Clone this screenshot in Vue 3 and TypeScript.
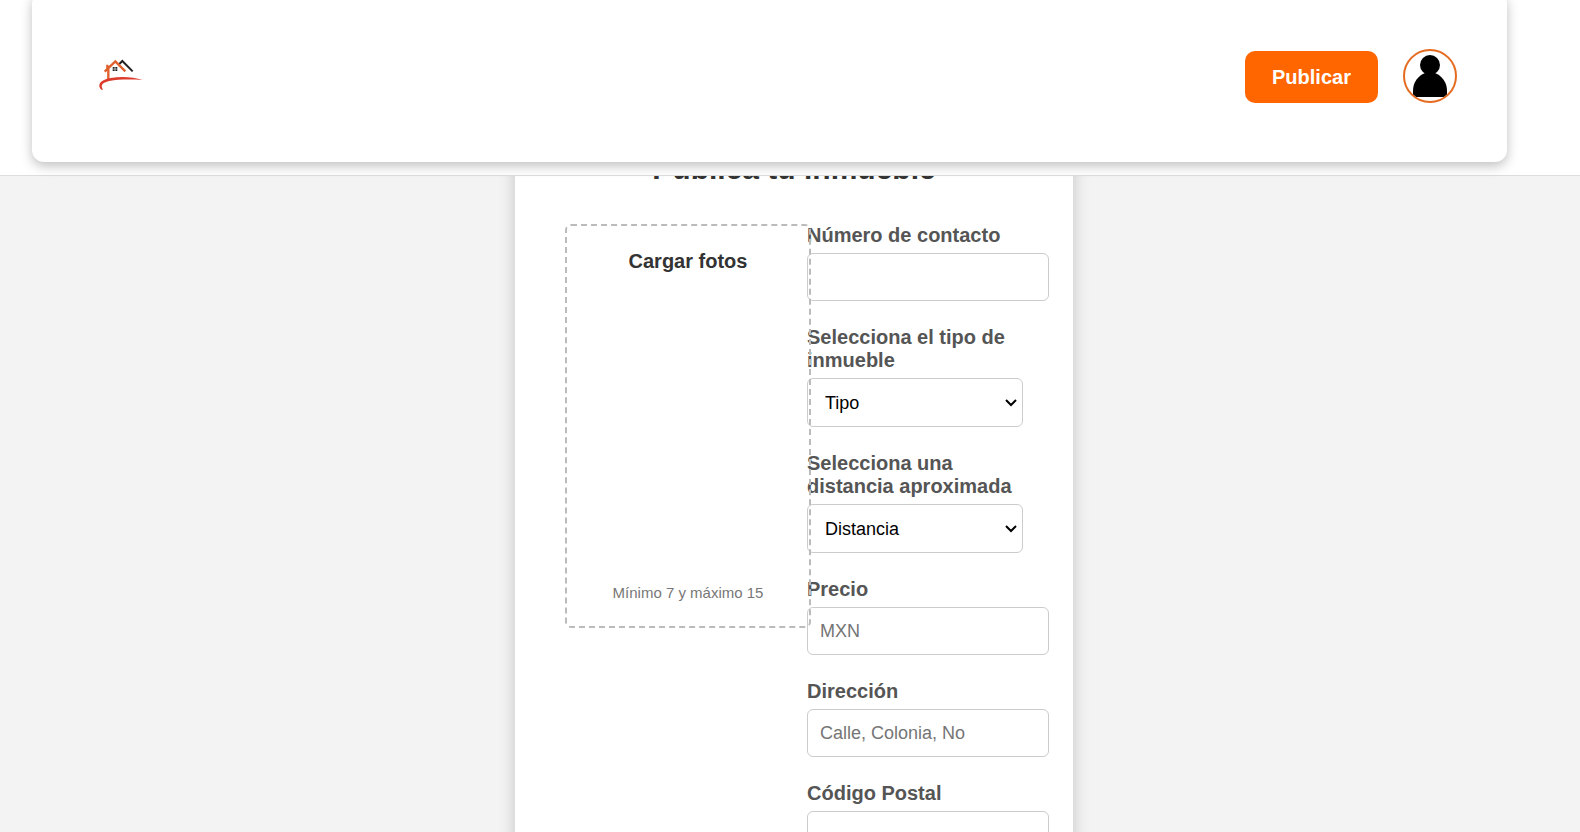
<script setup lang="ts">
import { reactive } from 'vue'

interface Field {
  id: string
  label: string
  kind: 'input' | 'select'
  hint: string
}

const fields: Field[] = [
  { id: 'contacto', label: 'Número de contacto', kind: 'input', hint: '' },
  { id: 'tipo', label: 'Selecciona el tipo de inmueble', kind: 'select', hint: 'Tipo' },
  { id: 'distancia', label: 'Selecciona una distancia aproximada', kind: 'select', hint: 'Distancia' },
  { id: 'precio', label: 'Precio', kind: 'input', hint: 'MXN' },
  { id: 'direccion', label: 'Dirección', kind: 'input', hint: 'Calle, Colonia, No' },
  { id: 'postal', label: 'Código Postal', kind: 'input', hint: '' },
]

const values = reactive<Record<string, string>>({
  contacto: '', tipo: '', distancia: '', precio: '', direccion: '', postal: '',
})
</script>

<template>
  <div class="page">
    <header class="topbar">
      <nav class="nav-card">
        <a class="logo" href="#">
          <svg viewBox="48 48 150 108" width="50" height="36" aria-hidden="true">
            <path d="M118 72L127 63L158 94" fill="none" stroke="#222" stroke-width="6" />
            <path d="M74 95L106 64L136 94M85 122V84M82 74V88" fill="none" stroke="#e0602c" stroke-width="7" />
            <path d="M98 81h6v5h-6zM106 81h6v5h-6zM98 88h6v5h-6zM106 88h6v5h-6z" fill="#222" />
            <path d="M64 149C50 136 60 119 92 114C125 109 160 111 188 120C150 118 115 118 88 123C66 128 61 136 69 149Z" fill="#dc3c2c" />
          </svg>
        </a>
        <div class="actions">
          <button class="publish" type="button">Publicar</button>
          <button class="avatar" type="button">
            <svg viewBox="0 0 50 50" width="50" height="50" aria-hidden="true">
              <circle cx="25" cy="14" r="10" />
              <path d="M8 46V40C8 31 13 25 20 22H30C37 25 42 31 42 40V46Z" />
            </svg>
          </button>
        </div>
      </nav>
    </header>

    <main class="content">
      <form class="form-card" @submit.prevent>
        <h1 class="title">Publica tu inmueble</h1>
        <div class="columns">
          <section class="photos">
            <h2>Cargar fotos</h2>
            <p>Mínimo 7 y máximo 15</p>
          </section>
          <div class="fields">
            <div v-for="f in fields" :key="f.id" class="field">
              <label :for="f.id">{{ f.label }}</label>
              <select v-if="f.kind === 'select'" :id="f.id" v-model="values[f.id]">
                <option value="">{{ f.hint }}</option>
              </select>
              <input v-else :id="f.id" v-model="values[f.id]" type="text" :placeholder="f.hint" />
            </div>
          </div>
        </div>
      </form>
    </main>
  </div>
</template>

<style>
body {
  margin: 0;
}
</style>

<style scoped>
.page {
  height: 100vh;
  overflow-y: auto;
  scrollbar-width: none;
  background: #f3f3f3;
  font-family: "Liberation Sans", Arial, sans-serif;
}
.topbar {
  position: fixed;
  inset: 0 0 auto 0;
  z-index: 10;
  padding: 0 73px 13px 32px;
  background: #fff;
  border-bottom: 1px solid #ddd;
}
.nav-card {
  display: flex;
  align-items: center;
  justify-content: space-between;
  box-sizing: border-box;
  height: 170px;
  margin-top: -8px;
  padding: 0 50px 2px 64px;
  border-radius: 12px;
  background: #fff;
  box-shadow: 0 4px 12px rgba(0, 0, 0, 0.25);
}
.logo {
  padding-bottom: 4px;
}
.logo svg,
.avatar svg {
  display: block;
}
.actions {
  display: flex;
  align-items: flex-end;
  gap: 25px;
}
.publish {
  width: 133px;
  height: 52px;
  padding: 0;
  border: 0;
  border-radius: 10px;
  background: #f60;
  color: #fff;
  font: bold 20px "Liberation Sans", Arial, sans-serif;
}
.avatar {
  padding: 0;
  border: 2px solid #e56b1f;
  border-radius: 50%;
  background: #fff;
  overflow: hidden;
}
.content {
  display: flex;
  justify-content: center;
  padding: 102px 0 50px;
}
.form-card {
  width: 458px;
  margin-left: 8px;
  padding: 50px;
  background: #fff;
  box-shadow: 0 0 15px rgba(0, 0, 0, 0.2);
}
.title {
  margin: 0 0 38px;
  color: #333;
  font-size: 30px;
  line-height: 34px;
  text-align: center;
}
.columns {
  display: grid;
  grid-template-columns: 1fr 1fr;
  align-items: start;
  gap: 26px;
}
.photos {
  position: relative;
  z-index: 1;
  display: flex;
  flex-direction: column;
  align-items: center;
  justify-content: space-between;
  width: 100%;
  height: 352px;
  padding: 24px 13px;
  border: 2px dashed #bbb;
  border-radius: 6px;
}
.photos h2 {
  margin: 0;
  color: #333;
  font-size: 20px;
  line-height: 23px;
}
.photos p {
  margin: 0;
  color: #777;
  font-size: 15px;
  line-height: 18px;
}
.fields {
  display: flex;
  flex-direction: column;
  gap: 25px;
  min-width: 0;
}
.field {
  display: flex;
  flex-direction: column;
  align-items: flex-start;
  gap: 6px;
}
label {
  color: #555;
  font-size: 20px;
  font-weight: bold;
  line-height: 23px;
}
input,
select {
  border: 1px solid #ccc;
  border-radius: 6px;
  background-color: #fff;
  font: 18px "Liberation Sans", Arial, sans-serif;
}
input {
  width: 100%;
  height: 22px;
  padding: 12px;
}
input::placeholder {
  color: #757575;
}
select {
  appearance: none;
  box-sizing: border-box;
  width: 100%;
  height: 49px;
  padding: 12px 24px 12px 17px;
  background: #fff url("data:image/svg+xml,%3Csvg xmlns='http://www.w3.org/2000/svg' width='12' height='8'%3E%3Cpath d='M1 1l5 5 5-5' fill='none' stroke='%23000' stroke-width='2'/%3E%3C/svg%3E") no-repeat right 5px center;
  color: #000;
}
</style>
